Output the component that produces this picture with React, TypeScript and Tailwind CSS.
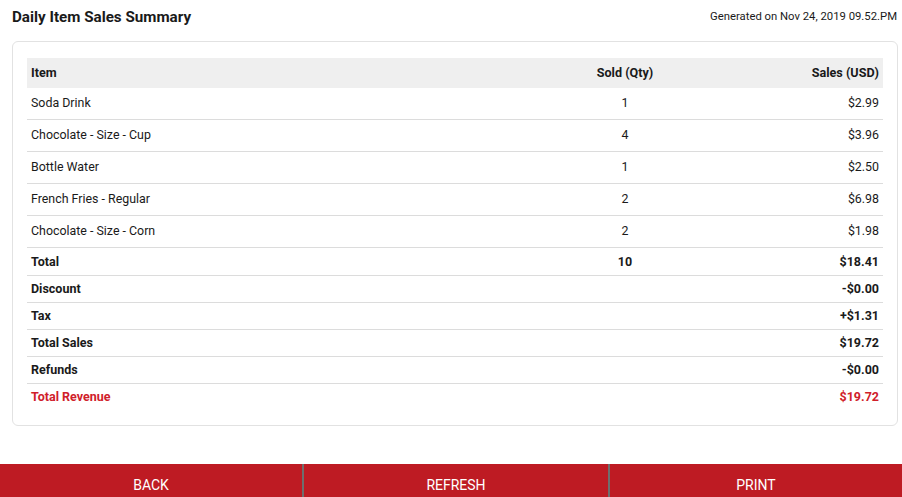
import React from 'react';

interface SaleRow {
  item: string;
  qty: number;
  sales: string;
}

const rows: SaleRow[] = [
  { item: 'Soda Drink', qty: 1, sales: '$2.99' },
  { item: 'Chocolate - Size - Cup', qty: 4, sales: '$3.96' },
  { item: 'Bottle Water', qty: 1, sales: '$2.50' },
  { item: 'French Fries - Regular', qty: 2, sales: '$6.98' },
  { item: 'Chocolate - Size - Corn', qty: 2, sales: '$1.98' },
];

const summary: { label: string; qty?: string; value: string; red?: boolean }[] = [
  { label: 'Total', qty: '10', value: '$18.41' },
  { label: 'Discount', value: '-$0.00' },
  { label: 'Tax', value: '+$1.31' },
  { label: 'Total Sales', value: '$19.72' },
  { label: 'Refunds', value: '-$0.00' },
  { label: 'Total Revenue', value: '$19.72', red: true },
];

const App: React.FC = () => {
  return (
    <div className="w-full bg-white text-[#1a1a1a] font-['Roboto',sans-serif]">
      {/* Header */}
      <div className="flex items-center justify-between pl-3 pr-[5px] h-[34px]">
        <h1 className="text-[15.2px] font-bold">Daily Item Sales Summary</h1>
        <span className="text-[11.3px]">Generated on Nov 24, 2019 09.52.PM</span>
      </div>

      {/* Card */}
      <div className="ml-3 mr-[4px] mt-[7px] border border-[#e2e2e2] rounded-[6px] px-[14px] pt-[16px] pb-[14px]">
        <div className="grid grid-cols-[1fr_200px_154px] items-center h-[30px] bg-[#efefef] px-1 text-[12.6px] font-bold">
          <span>Item</span>
          <span className="text-center">Sold (Qty)</span>
          <span className="text-right">Sales (USD)</span>
        </div>

        {rows.map((r) => (
          <div
            key={r.item}
            className="grid grid-cols-[1fr_200px_154px] items-center h-[32px] px-1 text-[12.4px] border-b border-[#dcdcdc]"
          >
            <span>{r.item}</span>
            <span className="text-center">{r.qty}</span>
            <span className="text-right">{r.sales}</span>
          </div>
        ))}

        <div className="pt-[1px]">
          {summary.map((s, i) => (
            <div
              key={s.label}
              className={`grid grid-cols-[1fr_200px_154px] items-center h-[27px] px-1 text-[12.5px] font-bold ${
                i < summary.length - 1 ? 'border-b border-[#dcdcdc]' : ''
              } ${s.red ? 'text-[#d0202a]' : ''}`}
            >
              <span>{s.label}</span>
              <span className="text-center">{s.qty ?? ''}</span>
              <span className="text-right">{s.value}</span>
            </div>
          ))}
        </div>
      </div>

      {/* Action bar */}
      <div className="mt-[38px] grid grid-cols-[302px_306px_1fr] h-[42px] bg-[#be1b23] text-white text-[14px]">
        <button className="flex items-center justify-center uppercase">BACK</button>
        <button className="flex items-center justify-center border-l-2 border-[#6e6e6e] uppercase">REFRESH</button>
        <button className="flex items-center justify-center border-l-2 border-[#6e6e6e] uppercase">PRINT</button>
      </div>
    </div>
  );
};

export default App;
